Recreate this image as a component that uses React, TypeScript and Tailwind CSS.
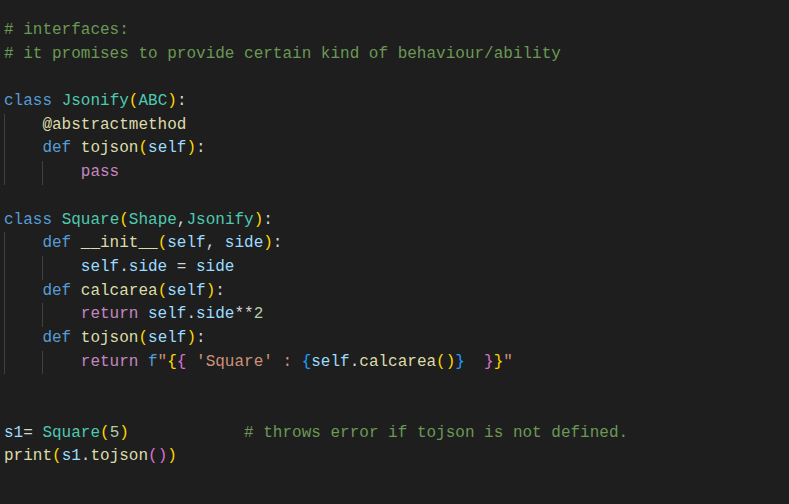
import React from 'react';

type Tok = [string, string];

const C = {
  cm: 'text-[#6a9955]',
  kw: 'text-[#569cd6]',
  cls: 'text-[#4ec9b0]',
  fn: 'text-[#dcdcaa]',
  vr: 'text-[#9cdcfe]',
  ctl: 'text-[#c586c0]',
  str: 'text-[#ce9178]',
  num: 'text-[#b5cea8]',
  op: 'text-[#d4d4d4]',
  b1: 'text-[#ffd700]',
  b2: 'text-[#da70d6]',
  b3: 'text-[#179fff]',
};

const LINES: { indent: number; toks: Tok[] }[] = [
  { indent: 0, toks: [['# interfaces:', C.cm]] },
  { indent: 0, toks: [['# it promises to provide certain kind of behaviour/ability', C.cm]] },
  { indent: 0, toks: [] },
  {
    indent: 0,
    toks: [
      ['class', C.kw],
      [' ', C.op],
      ['Jsonify', C.cls],
      ['(', C.b1],
      ['ABC', C.cls],
      [')', C.b1],
      [':', C.op],
    ],
  },
  { indent: 1, toks: [['@abstractmethod', C.fn]] },
  {
    indent: 1,
    toks: [
      ['def', C.kw],
      [' ', C.op],
      ['tojson', C.fn],
      ['(', C.b1],
      ['self', C.vr],
      [')', C.b1],
      [':', C.op],
    ],
  },
  { indent: 2, toks: [['pass', C.ctl]] },
  { indent: 0, toks: [] },
  {
    indent: 0,
    toks: [
      ['class', C.kw],
      [' ', C.op],
      ['Square', C.cls],
      ['(', C.b1],
      ['Shape', C.cls],
      [',', C.op],
      ['Jsonify', C.cls],
      [')', C.b1],
      [':', C.op],
    ],
  },
  {
    indent: 1,
    toks: [
      ['def', C.kw],
      [' ', C.op],
      ['__init__', C.fn],
      ['(', C.b1],
      ['self', C.vr],
      [', ', C.op],
      ['side', C.vr],
      [')', C.b1],
      [':', C.op],
    ],
  },
  {
    indent: 2,
    toks: [
      ['self', C.vr],
      ['.', C.op],
      ['side', C.vr],
      [' = ', C.op],
      ['side', C.vr],
    ],
  },
  {
    indent: 1,
    toks: [
      ['def', C.kw],
      [' ', C.op],
      ['calcarea', C.fn],
      ['(', C.b1],
      ['self', C.vr],
      [')', C.b1],
      [':', C.op],
    ],
  },
  {
    indent: 2,
    toks: [
      ['return', C.ctl],
      [' ', C.op],
      ['self', C.vr],
      ['.', C.op],
      ['side', C.vr],
      ['**', C.op],
      ['2', C.num],
    ],
  },
  {
    indent: 1,
    toks: [
      ['def', C.kw],
      [' ', C.op],
      ['tojson', C.fn],
      ['(', C.b1],
      ['self', C.vr],
      [')', C.b1],
      [':', C.op],
    ],
  },
  {
    indent: 2,
    toks: [
      ['return', C.ctl],
      [' ', C.op],
      ['f', C.kw],
      ['"', C.str],
      ['{', C.b1],
      ['{', C.b2],
      [" 'Square' : ", C.str],
      ['{', C.b3],
      ['self', C.vr],
      ['.', C.op],
      ['calcarea', C.fn],
      ['()', C.b1],
      ['}', C.b3],
      ['  ', C.str],
      ['}', C.b2],
      ['}', C.b1],
      ['"', C.str],
    ],
  },
  { indent: 0, toks: [] },
  { indent: 0, toks: [] },
  {
    indent: 0,
    toks: [
      ['s1', C.vr],
      ['= ', C.op],
      ['Square', C.cls],
      ['(', C.b1],
      ['5', C.num],
      [')', C.b1],
      ['            ', C.op],
      ['# throws error if tojson is not defined.', C.cm],
    ],
  },
  {
    indent: 0,
    toks: [
      ['print', C.fn],
      ['(', C.b1],
      ['s1', C.vr],
      ['.', C.op],
      ['tojson', C.fn],
      ['()', C.b2],
      [')', C.b1],
    ],
  },
];

function CodeLine({ indent, toks }: { indent: number; toks: Tok[] }) {
  return (
    <div className="flex h-[23.7px] items-stretch whitespace-pre">
      {Array.from({ length: indent }).map((_, i) => (
        <span key={i} className="w-[38.4px] shrink-0 border-l border-[#404040]" />
      ))}
      <span className="leading-[23.7px]">
        {toks.map(([t, c], i) => (
          <span key={i} className={c}>
            {t}
          </span>
        ))}
      </span>
    </div>
  );
}

export default function App() {
  return (
    <div className="h-[504px] w-[789px] overflow-hidden bg-[#1e1e1e] pl-[4px] pt-[19px] font-['Liberation_Mono',monospace] text-[16px] text-[#d4d4d4]">
      {LINES.map((l, i) => (
        <CodeLine key={i} indent={l.indent} toks={l.toks} />
      ))}
    </div>
  );
}
